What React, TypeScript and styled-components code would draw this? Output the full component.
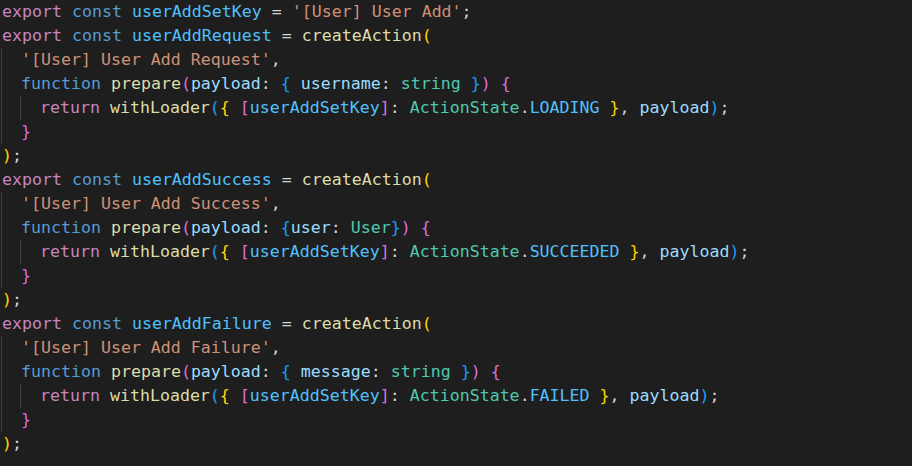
import React from "react";
import styled, { createGlobalStyle } from "styled-components";

const Global = createGlobalStyle`
  html, body { margin: 0; padding: 0; background: #1e1e1e; }
  #root { width: 912px; height: 466px; overflow: hidden; }
`;

const Editor = styled.div`
  width: 912px;
  height: 466px;
  background: #1e1e1e;
  padding: 0 0 0 2px;
  box-sizing: border-box;
  font-family: "DejaVu Sans Mono", "Liberation Mono", monospace;
  font-size: 16.6px;
  color: #d4d4d4;
  display: flex;
  flex-direction: column;
`;

const Line = styled.div`
  height: 24px;
  line-height: 24px;
  white-space: pre;
  display: flex;
  align-items: stretch;
`;

const Indent = styled.span`
  display: inline-block;
  width: 20px;
  height: 24px;
  box-sizing: border-box;
  border-left: 1px solid #404040;
  margin-left: -1px;
  padding-left: 1px;
`;

const Tok = styled.span<{ $c: string }>`
  color: ${(p) => p.$c};
`;

const C = {
  kw: "#c586c0",
  st: "#569cd6",
  cn: "#4fc1ff",
  op: "#d4d4d4",
  str: "#ce9178",
  fn: "#dcdcaa",
  b1: "#ffd700",
  b2: "#da70d6",
  b3: "#179fff",
  vr: "#9cdcfe",
  ty: "#4ec9b0",
};

type T = [string, string];

const t = (c: string, s: string): T => [c, s];

function exportLine(name: string): T[] {
  return [
    t(C.kw, "export"),
    t(C.op, " "),
    t(C.st, "const"),
    t(C.op, " "),
    t(C.cn, name),
    t(C.op, " = "),
    t(C.fn, "createAction"),
    t(C.b1, "("),
  ];
}

function returnLine(state: string): T[] {
  return [
    t(C.kw, "return"),
    t(C.op, " "),
    t(C.fn, "withLoader"),
    t(C.b3, "("),
    t(C.b1, "{"),
    t(C.op, " "),
    t(C.b2, "["),
    t(C.cn, "userAddSetKey"),
    t(C.b2, "]"),
    t(C.op, ": "),
    t(C.ty, "ActionState"),
    t(C.op, "."),
    t(C.cn, state),
    t(C.op, " "),
    t(C.b1, "}"),
    t(C.op, ", "),
    t(C.vr, "payload"),
    t(C.b3, ")"),
    t(C.op, ";"),
  ];
}

function prepareLine(inner: T[]): T[] {
  return [
    t(C.st, "function"),
    t(C.op, " "),
    t(C.fn, "prepare"),
    t(C.b2, "("),
    t(C.vr, "payload"),
    t(C.op, ": "),
    ...inner,
    t(C.b2, ")"),
    t(C.op, " "),
    t(C.b2, "{"),
  ];
}

type L = { indent: number; toks: T[] };

function block(name: string, label: string, inner: T[], state: string): L[] {
  return [
    { indent: 0, toks: exportLine(name) },
    { indent: 1, toks: [t(C.str, `'[User] User Add ${label}'`), t(C.op, ",")] },
    { indent: 1, toks: prepareLine(inner) },
    { indent: 2, toks: returnLine(state) },
    { indent: 1, toks: [t(C.b2, "}")] },
    { indent: 0, toks: [t(C.b1, ")"), t(C.op, ";")] },
  ];
}

const lines: L[] = [
  {
    indent: 0,
    toks: [
      t(C.kw, "export"),
      t(C.op, " "),
      t(C.st, "const"),
      t(C.op, " "),
      t(C.cn, "userAddSetKey"),
      t(C.op, " = "),
      t(C.str, "'[User] User Add'"),
      t(C.op, ";"),
    ],
  },
  ...block(
    "userAddRequest",
    "Request",
    [
      t(C.b3, "{"),
      t(C.op, " "),
      t(C.vr, "username"),
      t(C.op, ": "),
      t(C.ty, "string"),
      t(C.op, " "),
      t(C.b3, "}"),
    ],
    "LOADING"
  ),
  ...block(
    "userAddSuccess",
    "Success",
    [
      t(C.b3, "{"),
      t(C.vr, "user"),
      t(C.op, ": "),
      t(C.ty, "User"),
      t(C.b3, "}"),
    ],
    "SUCCEEDED"
  ),
  ...block(
    "userAddFailure",
    "Failure",
    [
      t(C.b3, "{"),
      t(C.op, " "),
      t(C.vr, "message"),
      t(C.op, ": "),
      t(C.ty, "string"),
      t(C.op, " "),
      t(C.b3, "}"),
    ],
    "FAILED"
  ),
];

export default function App() {
  return (
    <>
      <Global />
      <Editor>
        {lines.map((l, i) => (
          <Line key={i}>
            {Array.from({ length: l.indent }).map((_, j) => (
              <Indent key={j} />
            ))}
            <span>
              {l.toks.map(([c, s], k) => (
                <Tok key={k} $c={c}>
                  {s}
                </Tok>
              ))}
            </span>
          </Line>
        ))}
      </Editor>
    </>
  );
}
